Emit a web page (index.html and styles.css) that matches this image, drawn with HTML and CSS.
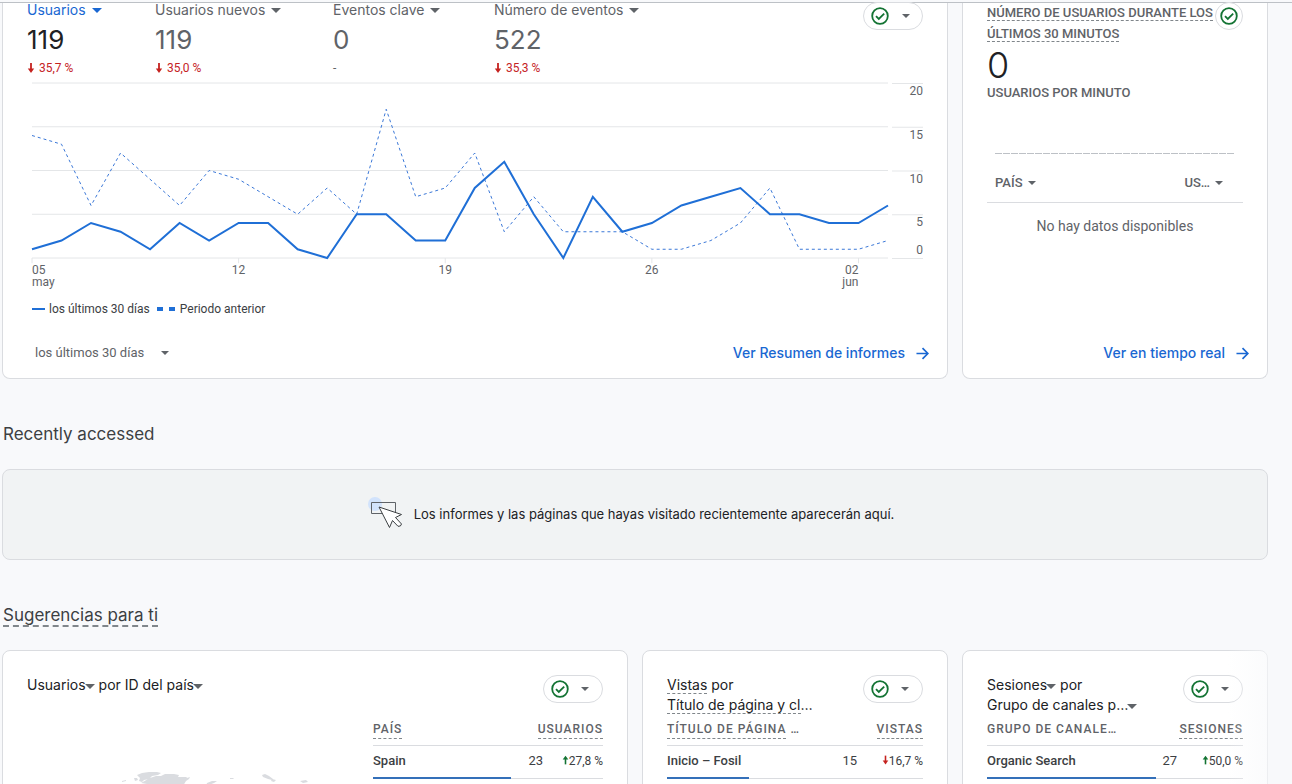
FILE: index.html
```html
<!DOCTYPE html>
<html lang="es">
<head>
<meta charset="utf-8">
<meta name="viewport" content="width=device-width, initial-scale=1">
<title>Analytics</title>
<link rel="stylesheet" href="styles.css">
</head>
<body>
<svg class="defs" aria-hidden="true">
  <symbol id="check" viewBox="0 0 18 18"><circle cx="9" cy="9" r="7.8" fill="none" stroke="#137333" stroke-width="1.8"/><path d="M5 9.2l2.8 2.8 5.4-5.4" fill="none" stroke="#137333" stroke-width="1.8"/></symbol>
  <symbol id="arrow" viewBox="0 0 14 14"><path d="M0.5 7h12M7 1.2L12.8 7 7 12.8" fill="none" stroke="currentColor" stroke-width="1.8"/></symbol>
  <symbol id="down" viewBox="0 0 8 10"><path d="M4 0v7" fill="none" stroke="currentColor" stroke-width="1.8"/><path d="M0.8 5.600h6.400L4 10z" fill="currentColor"/></symbol>
  <symbol id="up" viewBox="0 0 8 10"><path d="M4 10V3" fill="none" stroke="currentColor" stroke-width="1.8"/><path d="M0.8 4.400h6.400L4 0z" fill="currentColor"/></symbol>
</svg>
<div class="topbar"></div>
<main class="page">
  <section class="grid">
    <article class="card overview">
      <div class="overview-head">
        <div class="metrics">
          <div class="metric active">
            <button class="pick">Usuarios<i class="caret"></i></button>
            <div class="value">119</div>
            <div class="delta neg"><svg><use href="#down"/></svg>35,7 %</div>
          </div>
          <div class="metric">
            <button class="pick">Usuarios nuevos<i class="caret"></i></button>
            <div class="value">119</div>
            <div class="delta neg"><svg><use href="#down"/></svg>35,0 %</div>
          </div>
          <div class="metric">
            <button class="pick">Eventos clave<i class="caret"></i></button>
            <div class="value">0</div>
            <div class="delta">-</div>
          </div>
          <div class="metric">
            <button class="pick">Número de eventos<i class="caret"></i></button>
            <div class="value">522</div>
            <div class="delta neg"><svg><use href="#down"/></svg>35,3 %</div>
          </div>
        </div>
        <button class="status" aria-label="Calidad de los datos"><svg><use href="#check"/></svg><i class="caret small"></i></button>
      </div>
      <div class="chart">
        <svg class="plot" viewBox="0 0 29 20" preserveAspectRatio="none" role="img" aria-label="Usuarios por día">
          <path class="rule" d="M0 0H29M0 5H29M0 10H29M0 15H29M0 20H29M0 20v.6M7 20v.6M14 20v.6M21 20v.6M28 20v.6"/>
          <polyline class="previous" points="0,6 1,7 2,14 3,8 4,11 5,14 6,10 7,11 8,13 9,15 10,12 11,15 12,3 13,13 14,12 15,8 16,17 17,13 18,17 19,17 20,17 21,19 22,19 23,18 24,16 25,12 26,19 27,19 28,19 29,18"/>
          <polyline class="current" points="0,19 1,18 2,16 3,17 4,19 5,16 6,18 7,16 8,16 9,19 10,20 11,15 12,15 13,18 14,18 15,12 16,9 17,15 18,20 19,13 20,17 21,16 22,14 23,13 24,12 25,15 26,15 27,16 28,16 29,14"/>
        </svg>
        <div class="y-axis"><span>20</span><span>15</span><span>10</span><span>5</span><span class="zero">0</span></div>
        <div class="x-axis"><span class="first">05<br>may</span><span>12</span><span>19</span><span>26</span><span class="last">02<br>jun</span></div>
      </div>
      <div class="legend"><i class="line"></i><span>los últimos 30 días</span><i class="dash"></i><span>Periodo anterior</span></div>
      <footer class="foot">
        <button class="range">los últimos 30 días<i class="caret small"></i></button>
        <a class="more" href="#informes">Ver Resumen de informes<svg><use href="#arrow"/></svg></a>
      </footer>
    </article>

    <article class="card realtime">
      <div class="realtime-head">
        <h2 class="label"><span class="dotted">NÚMERO DE USUARIOS DURANTE LOS ÚLTIMOS 30 MINUTOS</span></h2>
        <button class="status round" aria-label="Calidad de los datos"><svg><use href="#check"/></svg></button>
      </div>
      <div class="big">0</div>
      <div class="label">USUARIOS POR MINUTO</div>
      <div class="minutes"></div>
      <div class="columns">
        <button class="label">PAÍS<i class="caret small"></i></button>
        <button class="label">US…<i class="caret small"></i></button>
      </div>
      <p class="nodata">No hay datos disponibles</p>
      <footer class="foot"><a class="more" href="#tiempo-real">Ver en tiempo real<svg><use href="#arrow"/></svg></a></footer>
    </article>
  </section>

  <h2 class="title">Recently accessed</h2>
  <section class="empty">
    <svg viewBox="0 0 36 34"><circle cx="7" cy="7" r="7" fill="#d2e3fc"/><path d="M3.500 5.500h24v11h-24z" fill="none" stroke="#5f6368"/><path d="M11 10l10.500 20.500 3-7 5.500 5.800q3 .5 3.500-2.300l-6-6.500 6-3z" fill="#fff" stroke="#3c4043" stroke-linejoin="round"/></svg>
    <p>Los informes y las páginas que hayas visitado recientemente aparecerán aquí.</p>
  </section>

  <h2 class="title suggestions"><span>Sugerencias para ti</span></h2>
  <section class="grid carousel">
    <article class="card insight wide">
      <header class="insight-head">
        <h3><button>Usuarios<i class="caret"></i></button> por <button>ID del país<i class="caret"></i></button></h3>
        <button class="status" aria-label="Calidad de los datos"><svg><use href="#check"/></svg><i class="caret small"></i></button>
      </header>
      <div class="split">
        <svg class="map" viewBox="0 0 330 80" role="img" aria-label="Mapa mundial"><path fill="#dadce0" d="M110 57l5-2 7-1 8 0 4 1-3 2-6 1-3 3-5 1-2 2-3-1 1-3zM107 60l3 0 1 2-3 1zM123 60l6-2 5 0 4-2 9 0 5 1-1 2 8 0 3 2-3 2-3 5-8 4-26 0-2-6-6-1zM95 63l4-1 0 1-4 1zM160 60l3-1-1 2-3 1zM180 65l5-2 5 0-3 2-8 3zM203 60l4 0-1 1-3 0zM235 57l3-1 4 2 4 3-1 1-4-1-5-2zM245 61l4 1-2 2-3-1zM273 63l6-1 2 2-5 1z"/></svg>
        <div>
          <table class="data">
            <thead><tr><th><span>PAÍS</span></th><th colspan="2"><span>USUARIOS</span></th></tr></thead>
            <tbody><tr><td>Spain</td><td>23</td><td><svg class="pos"><use href="#up"/></svg>27,8 %</td></tr></tbody>
          </table>
          <div class="bar"><i style="width:60%"></i></div>
        </div>
      </div>
    </article>

    <article class="card insight">
      <header class="insight-head">
        <h3><span class="dotted">Vistas</span> por<br><span class="dotted">Título de página y cl</span>…</h3>
        <button class="status" aria-label="Calidad de los datos"><svg><use href="#check"/></svg><i class="caret small"></i></button>
      </header>
      <table class="data">
        <thead><tr><th><span>TÍTULO DE PÁGINA</span> …</th><th colspan="2"><span>VISTAS</span></th></tr></thead>
        <tbody><tr><td>Inicio – Fosil</td><td>15</td><td><svg class="neg"><use href="#down"/></svg>16,7 %</td></tr></tbody>
      </table>
      <div class="bar"><i style="width:32%"></i></div>
    </article>

    <article class="card insight">
      <header class="insight-head">
        <h3><button>Sesiones<i class="caret"></i></button> por<br><button>Grupo de canales p…<i class="caret"></i></button></h3>
        <button class="status" aria-label="Calidad de los datos"><svg><use href="#check"/></svg><i class="caret small"></i></button>
      </header>
      <table class="data">
        <thead><tr><th>GRUPO DE CANALE…</th><th colspan="2"><span>SESIONES</span></th></tr></thead>
        <tbody><tr><td>Organic Search</td><td>27</td><td><svg class="pos"><use href="#up"/></svg>50,0 %</td></tr></tbody>
      </table>
      <div class="bar"><i style="width:66%"></i></div>
    </article>
  </section>
</main>
</body>
</html>
```
FILE: styles.css
```css
:root {
  --display: Inter, "Open Sans", sans-serif;
  --text: Roboto, sans-serif;
  --grey: #5f6368;
  --line: #dadce0;
  --blue: #1f6fd6;
  --green: #137333;
  --red: #c5221f;
}
* { box-sizing: border-box; }
html { height: 100%; overflow: hidden; }
body { height: 100%; margin: 0; overflow: hidden; background: #f8f9fb; color: #202124; font: 12px/16px var(--text); }
h2, h3, p { margin: 0; font-weight: 400; }
button { padding: 0; border: 0; background: none; color: inherit; font: inherit; letter-spacing: inherit; cursor: pointer; }
.defs { position: absolute; width: 0; height: 0; }

.topbar { height: 3px; border-bottom: 1px solid #bdc1c6; }
.page { padding: 0 24px 0 2px; }
.grid { display: grid; grid-template-columns: repeat(4, minmax(0, 1fr)); gap: 14px; }
.card { background: #fff; border: 1px solid var(--line); border-radius: 8px; padding: 24px; }

.caret { display: inline-block; border: 5px solid transparent; border-top-color: var(--grey); border-bottom: 0; vertical-align: middle; }
.caret.small { border-width: 4px; border-bottom: 0; }

.status { display: flex; align-items: center; gap: 13px; flex: none; width: 60px; height: 28px; padding: 0 7px; border: 1px solid var(--line); border-radius: 14px; background: #fff; }
.status svg { width: 18px; height: 18px; }
.status.round { width: 28px; padding: 0; justify-content: center; }

/* overview */
.overview, .realtime { border-top: 0; border-radius: 0 0 8px 8px; padding-top: 0; padding-bottom: 11px; display: flex; flex-direction: column; }
.overview { grid-column: span 3; }
.overview-head, .realtime-head { display: flex; justify-content: space-between; margin-top: -1px; }
.overview-head { height: 81px; }
.metrics { display: grid; grid-template-columns: 128px 178px 161px auto; }
.metric { color: var(--grey); }
.pick { display: flex; align-items: center; gap: 6px; height: 16px; font: 14px/16px var(--display); white-space: nowrap; }
.value { font: 26px/32px var(--display); margin-top: 6px; }
.active .pick { color: #1967d2; }
.active .pick .caret { border-top-color: #1967d2; }
.active .value { color: #202124; }
.delta { display: flex; align-items: center; gap: 4px; margin-top: 4px; }
.delta svg { width: 8px; height: 10px; }
.neg { color: var(--red); }
.pos { color: var(--green); }

.chart { display: grid; grid-template-columns: minmax(0, 1fr) 31px; column-gap: 4px; margin-left: 5px; color: var(--grey); }
.plot { width: 100%; height: 175px; overflow: visible; }
.plot * { vector-effect: non-scaling-stroke; fill: none; }
.rule { stroke: #e4e6e8; }
.previous { stroke: #3b78d8; stroke-dasharray: 3 3; }
.current { stroke: var(--blue); stroke-width: 2; }
.y-axis { display: grid; grid-template-rows: repeat(4, 1fr); height: 176px; text-align: right; background: linear-gradient(#e4e6e8 0 1px, transparent 1px) 0 0 / 100% 25%; border-bottom: 1px solid #e4e6e8; }
.y-axis span { grid-column: 1; }
.y-axis .zero { grid-row: 4; align-self: end; }
.y-axis span:nth-child(4) { grid-row: 4; }
.x-axis { display: grid; grid-template-columns: repeat(4, minmax(0, 7fr)) minmax(0, 1fr); line-height: 12px; height: 31px; padding-top: 5px; }
.x-axis span { justify-self: start; width: 40px; margin-left: -20px; text-align: center; }
.x-axis .first { margin-left: 0; text-align: left; }
.x-axis .last { margin-left: -40px; text-align: right; }
.legend { display: flex; align-items: center; gap: 4px; margin: 11px 0 0 5px; color: #3c4043; }
.line { width: 13px; height: 2px; background: var(--blue); }
.dash { width: 18px; height: 4px; margin: 0 1px 0 3px; background: linear-gradient(90deg, var(--blue) 6px, transparent 6px 12px, var(--blue) 12px); }
.foot { display: flex; justify-content: space-between; align-items: center; margin-top: auto; height: 28px; }
.overview .foot { margin-top: 22px; }
.range { display: flex; align-items: center; gap: 17px; padding-left: 8px; color: var(--grey); font-size: 13px; }
.more { display: flex; align-items: center; gap: 11px; margin: 0 -6px 0 auto; color: #1967d2; font: 500 14px/20px var(--display); text-decoration: none; }
.more svg { width: 13px; height: 13px; }

/* realtime */
.label { color: var(--grey); font: 500 13px/16px var(--text); }
.realtime-head { height: 43px; }
.realtime-head .label { flex: 1; line-height: 21px; margin-right: -8px; }
.dotted { border-bottom: 1px dashed #80868b; }
.big { font: 300 36px/40px var(--display); }
.minutes { height: 1px; margin: 52px 8px 0; background: repeating-linear-gradient(90deg, #bdc1c6 0 7px, transparent 7px 8px); }
.columns { display: flex; justify-content: space-between; padding: 21px 20px 11px 8px; border-bottom: 1px solid var(--line); }
.columns button { display: flex; align-items: center; gap: 5px; }
.nodata { margin-top: 15px; font-size: 14px; text-align: center; color: var(--grey); }

/* sections */
.title { font: 17px/24px var(--display); color: #3c4043; margin: 43px 0 23px 1px; }
.empty { display: flex; align-items: center; justify-content: center; gap: 10px; height: 91px; padding: 0 8px 2px 0; border: 1px solid var(--line); border-radius: 8px; background: #f1f3f4; font: 13px/20px var(--display); }
.empty svg { width: 36px; height: 34px; }
.suggestions span { border-bottom: 2px dashed #80868b; }

.carousel { position: relative; }
.carousel::after { content: ""; position: absolute; inset: -40px -24px 0 auto; width: 64px; background: linear-gradient(90deg, transparent, #f8f9fb); pointer-events: none; }
.wide { grid-column: span 2; }
.insight-head { display: flex; justify-content: space-between; height: 43px; }
.insight-head h3 { font: 14px/20px var(--display); white-space: nowrap; }
.insight-head .caret { margin-left: -1px; }
.split { display: grid; grid-template-columns: 330px minmax(0, 1fr); column-gap: 16px; }
.map { width: 330px; height: 80px; }
.data { width: 100%; border-collapse: collapse; color: #3c4043; }
.data th { height: 27px; padding: 0 0 4px; text-align: left; font-weight: 500; letter-spacing: 1px; color: var(--grey); border-bottom: 1px solid var(--line); white-space: nowrap; }
.data th + th, .data td + td { text-align: right; }
.data th span { padding-bottom: 2px; border-bottom: 1px dashed #80868b; }
.data td { height: 32px; padding: 0; white-space: nowrap; }
.data td:first-child { font-size: 13px; font-weight: 500; }
.data td:nth-child(2) { font-size: 13px; }
.data td:last-child { width: 66px; }
.wide .data td:last-child { width: 60px; }
.data td svg { width: 7px; height: 10px; }
.bar { height: 2px; border-bottom: 1px solid var(--line); }
.bar i { display: block; height: 2px; background: #3470b9; }
```
